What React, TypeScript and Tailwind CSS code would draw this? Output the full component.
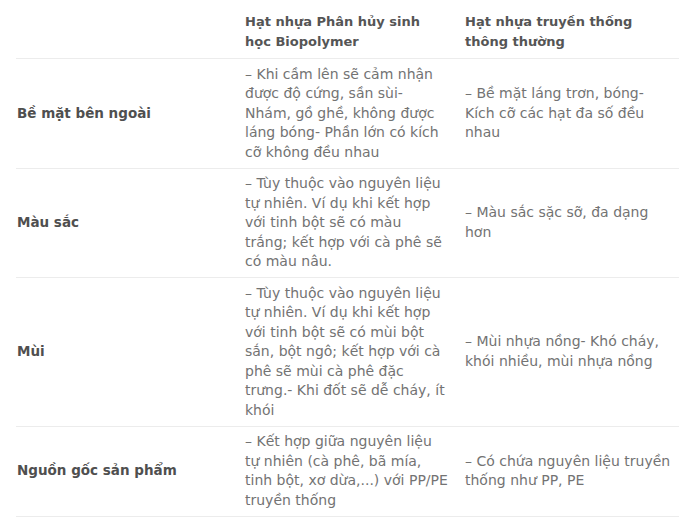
import React from "react";

type Row = {
  label: string;
  bio: string[];
  classic: string[];
};

const rows: Row[] = [
  {
    label: "Bề mặt bên ngoài",
    bio: [
      "– Khi cầm lên sẽ cảm nhận",
      "được độ cứng, sần sùi-",
      "Nhám, gồ ghề, không được",
      "láng bóng- Phần lớn có kích",
      "cỡ không đều nhau",
    ],
    classic: ["– Bề mặt láng trơn, bóng-", "Kích cỡ các hạt đa số đều", "nhau"],
  },
  {
    label: "Màu sắc",
    bio: [
      "– Tùy thuộc vào nguyên liệu",
      "tự nhiên. Ví dụ khi kết hợp",
      "với tinh bột sẽ có màu",
      "trắng; kết hợp với cà phê sẽ",
      "có màu nâu.",
    ],
    classic: ["– Màu sắc sặc sỡ, đa dạng", "hơn"],
  },
  {
    label: "Mùi",
    bio: [
      "– Tùy thuộc vào nguyên liệu",
      "tự nhiên. Ví dụ khi kết hợp",
      "với tinh bột sẽ có mùi bột",
      "sắn, bột ngô; kết hợp với cà",
      "phê sẽ mùi cà phê đặc",
      "trưng.- Khi đốt sẽ dễ cháy, ít",
      "khói",
    ],
    classic: ["– Mùi nhựa nồng- Khó cháy,", "khói nhiều, mùi nhựa nồng"],
  },
  {
    label: "Nguồn gốc sản phẩm",
    bio: [
      "– Kết hợp giữa nguyên liệu",
      "tự nhiên (cà phê, bã mía,",
      "tinh bột, xơ dừa,...) với PP/PE",
      "truyền thống",
    ],
    classic: ["– Có chứa nguyên liệu truyền", "thống như PP, PE"],
  },
];

const Lines = ({ lines }: { lines: string[] }) => (
  <>
    {lines.map((l, i) => (
      <span key={i} className="block whitespace-nowrap">
        {l}
      </span>
    ))}
  </>
);

export default function App() {
  return (
    <div
      className="bg-white w-[700px] h-[522px] px-4 text-[14px] leading-[19.5px]"
      style={{ fontFamily: '"DejaVu Sans", "Open Sans", sans-serif' }}
    >
      <table className="w-[663px] table-fixed border-collapse">
        <colgroup>
          <col className="w-[221px]" />
          <col className="w-[220px]" />
          <col className="w-[222px]" />
        </colgroup>
        <thead>
          <tr className="border-b border-[#ececec]">
            <th></th>
            <th className="pl-2 pt-3 pb-[7px] text-left align-top text-[13px] font-semibold text-[#555555]">
              <Lines lines={["Hạt nhựa Phân hủy sinh", "học Biopolymer"]} />
            </th>
            <th className="pl-2 pt-3 pb-[7px] text-left align-top text-[13px] font-semibold text-[#555555]">
              <Lines lines={["Hạt nhựa truyền thống", "thông thường"]} />
            </th>
          </tr>
        </thead>
        <tbody>
          {rows.map((row) => (
            <tr key={row.label} className="border-b border-[#ececec]">
              <td className="pl-px py-[5.5px] align-middle text-[13.5px] font-semibold text-[#4f4f4f]">
                {row.label}
              </td>
              <td className="pl-2 py-[5.5px] align-middle text-[#737373]">
                <Lines lines={row.bio} />
              </td>
              <td className="pl-2 py-[5.5px] align-middle text-[#737373]">
                <Lines lines={row.classic} />
              </td>
            </tr>
          ))}
        </tbody>
      </table>
    </div>
  );
}
